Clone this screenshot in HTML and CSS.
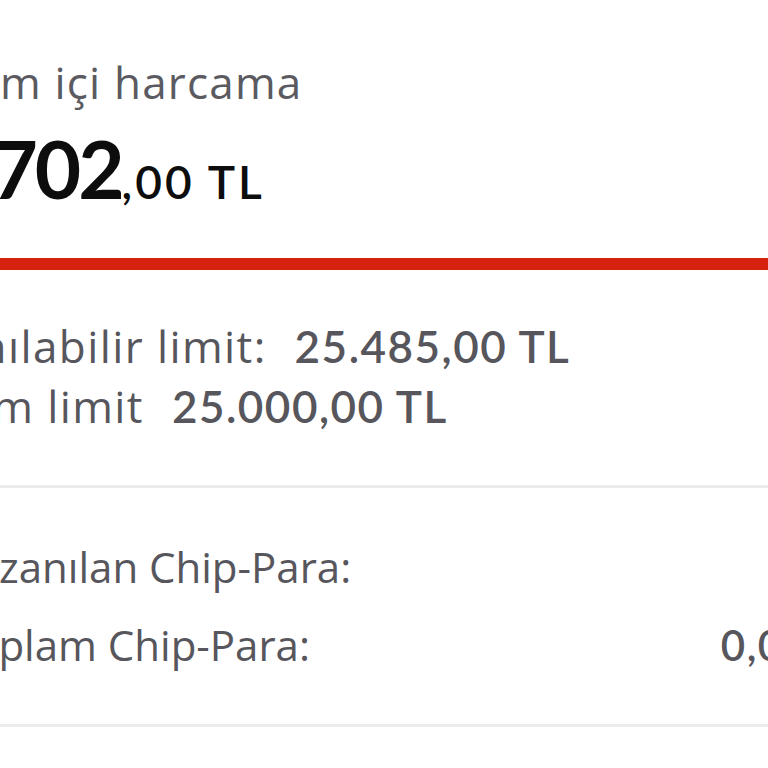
FILE: index.html
```html
<!DOCTYPE html>
<html lang="tr">
<head>
<meta charset="utf-8">
<title>Kart özeti</title>
<link rel="stylesheet" href="styles.css">
</head>
<body>
<div class="viewport">
  <div class="page">
    <section class="summary">
      <div class="title">Dönem içi harcama</div>
      <div class="amount"><span class="int">1.702</span><span class="dec">,00 TL</span></div>
    </section>
    <div class="redbar"></div>
    <section class="limits">
      <div class="limit-row"><span class="label">Kullanılabilir limit:</span><span class="value">25.485,00 TL</span></div>
      <div class="limit-row"><span class="label">Toplam limit</span><span class="value">25.000,00 TL</span></div>
    </section>
    <section class="chips">
      <div class="chip-row"><span class="label">Kazanılan Chip-Para:</span><span class="value"></span></div>
      <div class="chip-row"><span class="label">Toplam Chip-Para:</span><span class="value">0,00 TL</span></div>
    </section>
  </div>
</div>
</body>
</html>
```
FILE: styles.css
```css
html, body {
  margin: 0;
  padding: 0;
  background: #ffffff;
}

.viewport {
  width: 768px;
  height: 768px;
  overflow: hidden;
}

.page {
  margin-left: -140px;
  width: 1108px;
  font-family: "Open Sans", "Liberation Sans", sans-serif;
  color: #56565c;
}

.summary {
  padding: 56px 0 0 0;
}

.title {
  padding-left: 25px;
  font-size: 44px;
  line-height: 52px;
  letter-spacing: 1.2px;
  color: #5a5a60;
}

.amount {
  display: flex;
  align-items: baseline;
  height: 80px;
  margin-top: 20px;
  padding-left: 72px;
  line-height: 1;
  color: #0d0d0d;
  font-family: "Lato", "Liberation Sans", sans-serif;
}

.amount .int {
  font-size: 80px;
  font-weight: 700;
  letter-spacing: -3px;
}

.amount .dec {
  font-size: 46px;
  font-weight: 600;
  letter-spacing: 3px;
}

.redbar {
  margin-top: 50px;
  height: 12px;
  background: #d5230f;
}

.limits {
  padding: 46px 0 49px 12px;
  border-bottom: 3px solid #ebebeb;
}

.limit-row {
  display: flex;
  gap: 28px;
  font-size: 44px;
  line-height: 60px;
}

.limit-row .label {
  letter-spacing: 1.4px;
}

.limit-row .value {
  font-family: "Lato", "Liberation Sans", sans-serif;
  font-weight: 600;
  letter-spacing: 1.5px;
}

.chips {
  padding: 40px 0 40px 90px;
  border-bottom: 3px solid #ebebeb;
}

.chip-row {
  display: flex;
  justify-content: space-between;
  font-size: 42px;
  line-height: 78px;
  padding-right: 98px;
}

.chip-row .value {
  font-family: "Lato", "Liberation Sans", sans-serif;
  font-weight: 600;
  letter-spacing: 1.5px;
}
```
